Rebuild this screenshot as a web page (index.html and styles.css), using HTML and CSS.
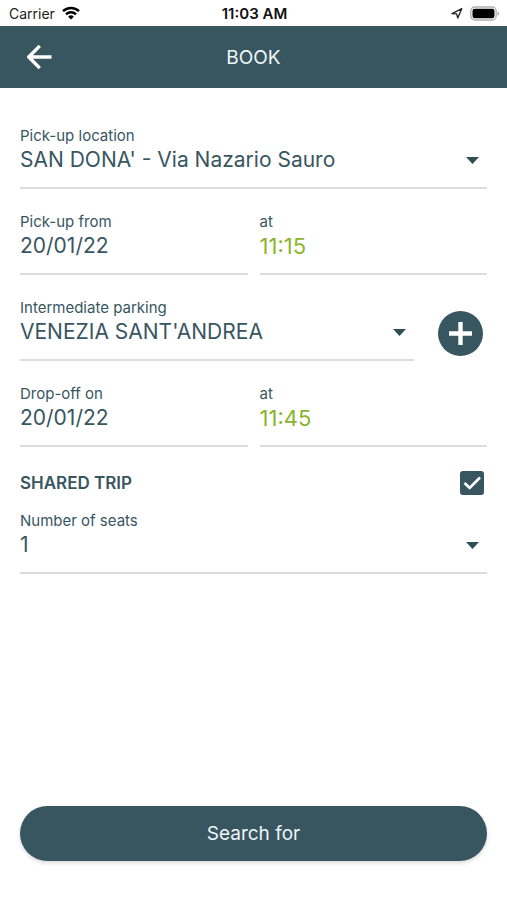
FILE: index.html
```html
<!DOCTYPE html>
<html lang="en">
<head>
<meta charset="utf-8">
<meta name="viewport" content="width=device-width, initial-scale=1">
<title>Book</title>
<link rel="stylesheet" href="styles.css">
</head>
<body>
<div class="status">
  <div class="status-left">
    <span>Carrier</span>
    <svg width="18" height="14" viewBox="0 0 18 14" fill="none" stroke="#000" stroke-width="2.5" aria-hidden="true">
      <path d="M1 5.2a11.3 11.3 0 0 1 16 0"/>
      <path d="M4 8.3a7.1 7.1 0 0 1 10 0"/>
      <path d="M9 13.6 6.1 10.7a4.1 4.1 0 0 1 5.8 0z" fill="#000" stroke="none"/>
    </svg>
  </div>
  <span class="clock">11:03 AM</span>
  <div class="status-right">
    <svg width="12" height="12" viewBox="0 0 12 12" fill="none" stroke="#222" stroke-width="1.3" stroke-linejoin="round" aria-hidden="true">
      <path d="M10.8 1.6 1 6.6l4.6.2 1.2 4.2z"/>
    </svg>
    <svg width="30" height="15" viewBox="0 0 30 15" aria-hidden="true">
      <rect x=".8" y="1" width="25.4" height="13" rx="4" fill="#fff" stroke="#b0b0b0" stroke-width="1.3"/>
      <rect x="2.5" y="2.7" width="22" height="9.6" rx="2.2" fill="#000"/>
      <path d="M27.6 5.2c2.2.8 2.2 3.8 0 4.6z" fill="#b0b0b0"/>
    </svg>
  </div>
</div>
<header class="bar">
  <button class="back" type="button" aria-label="Back">
    <svg width="26" height="26" viewBox="0 0 26 26" fill="none" stroke="#fff" stroke-width="3.4" stroke-linejoin="round" aria-hidden="true">
      <path d="M25.5 13H3M13.8 1.9 2.7 13l11.1 11.1"/>
    </svg>
  </button>
  <h1 class="title">BOOK</h1>
</header>
<form class="form">
  <div class="field">
    <label class="label" for="pickup">Pick-up location</label>
    <select class="value select" id="pickup"><option>SAN DONA' - Via Nazario Sauro</option></select>
  </div>
  <div class="pair">
    <div class="field">
      <label class="label" for="from-date">Pick-up from</label>
      <input class="value" id="from-date" type="text" value="20/01/22">
    </div>
    <div class="field">
      <label class="label" for="from-time">at</label>
      <input class="value time" id="from-time" type="text" value="11:15">
    </div>
  </div>
  <div class="stop">
    <div class="field">
      <label class="label" for="parking">Intermediate parking</label>
      <select class="value select" id="parking"><option>VENEZIA SANT'ANDREA</option></select>
    </div>
    <button class="add" type="button" aria-label="Add parking">
      <svg width="23" height="23" viewBox="0 0 23 23" stroke="#fff" stroke-width="4.4" aria-hidden="true"><path d="M11.5 0v23M0 11.5h23"/></svg>
    </button>
  </div>
  <div class="pair">
    <div class="field">
      <label class="label" for="to-date">Drop-off on</label>
      <input class="value" id="to-date" type="text" value="20/01/22">
    </div>
    <div class="field">
      <label class="label" for="to-time">at</label>
      <input class="value time" id="to-time" type="text" value="11:45">
    </div>
  </div>
  <div class="seats">
    <div class="shared">
      <label class="shared-label" for="shared">SHARED TRIP</label>
      <input class="check" id="shared" type="checkbox" checked>
    </div>
    <div class="field">
      <label class="label" for="seats">Number of seats</label>
      <select class="value select" id="seats"><option>1</option></select>
    </div>
  </div>
  <button class="search" type="submit">Search for</button>
</form>
</body>
</html>
```
FILE: styles.css
```css
:root {
  --teal: #38565f;
  --line: #dcdcdc;
}

* {
  box-sizing: border-box;
}

body {
  margin: 0;
  min-height: 100vh;
  display: flex;
  flex-direction: column;
  background: #fff;
  color: var(--teal);
  font-family: Inter, "Liberation Sans", sans-serif;
}

button, input, select {
  font-family: inherit;
  margin: 0;
}

.status {
  display: grid;
  grid-template-columns: 1fr auto 1fr;
  align-items: center;
  height: 26px;
  padding: 0 7px 0 9px;
  font-size: 14px;
  color: #222;
}

.status-left, .status-right {
  display: flex;
  align-items: center;
  gap: 7px;
}

.status-right {
  justify-content: flex-end;
}

.clock {
  font-size: 15px;
  font-weight: 600;
  color: #111;
}

.bar {
  display: grid;
  grid-template-columns: 1fr auto 1fr;
  align-items: center;
  height: 62px;
  padding: 0 20px;
  background: var(--teal);
  color: #eef6fa;
}

.back {
  display: flex;
  justify-self: start;
  padding: 6px;
  border: 0;
  background: none;
}

.title {
  margin: 0;
  font-size: 19px;
  font-weight: 400;
}

.form {
  flex: 1;
  display: flex;
  flex-direction: column;
  gap: 24px;
  padding: 39px 20px;
}

.field {
  min-width: 0;
  display: flex;
  flex-direction: column;
  padding-bottom: 12px;
  border-bottom: 2px solid var(--line);
}

.label {
  font-size: 15px;
  line-height: 18px;
}

.value {
  width: 100%;
  height: 30px;
  padding: 0;
  border: 0;
  background: none;
  color: var(--teal);
  font-size: 21px;
  line-height: 30px;
}

.select {
  appearance: none;
  background: url("data:image/svg+xml,%3Csvg xmlns='http://www.w3.org/2000/svg' width='13' height='7'%3E%3Cpath d='M0 0h13L6.5 7z' fill='%232f4f56'/%3E%3C/svg%3E") no-repeat right 8px center;
}

.time {
  color: #8ab52b;
  font-size: 22px;
}

.pair {
  display: grid;
  grid-template-columns: 1fr 1fr;
  gap: 12px;
}

.stop {
  display: flex;
  align-items: flex-end;
  gap: 24px;
  padding-right: 4px;
}

.stop .field {
  flex: 1;
}

.add {
  display: flex;
  align-items: center;
  justify-content: center;
  width: 45px;
  height: 45px;
  margin-bottom: 5px;
  padding: 0;
  border: 0;
  border-radius: 50%;
  background: var(--teal);
}

.seats {
  display: flex;
  flex-direction: column;
  gap: 17px;
}

.shared {
  display: flex;
  align-items: center;
  justify-content: space-between;
  padding-right: 3px;
}

.shared-label {
  font-size: 17px;
  font-weight: 600;
}

.check {
  appearance: none;
  width: 24px;
  height: 24px;
  border-radius: 3px;
  background: #ccc;
}

.check:checked {
  background: var(--teal) url("data:image/svg+xml,%3Csvg xmlns='http://www.w3.org/2000/svg' width='24' height='24'%3E%3Cpath d='M4.5 12 9.7 17 20 6.5' fill='none' stroke='%23fff' stroke-width='2.6'/%3E%3C/svg%3E") center no-repeat;
}

.search {
  height: 55px;
  margin-top: auto;
  border: 0;
  border-radius: 28px;
  background: var(--teal);
  box-shadow: 0 2px 4px rgba(0, 0, 0, .15);
  color: #eef6fa;
  font-size: 19px;
}
```
